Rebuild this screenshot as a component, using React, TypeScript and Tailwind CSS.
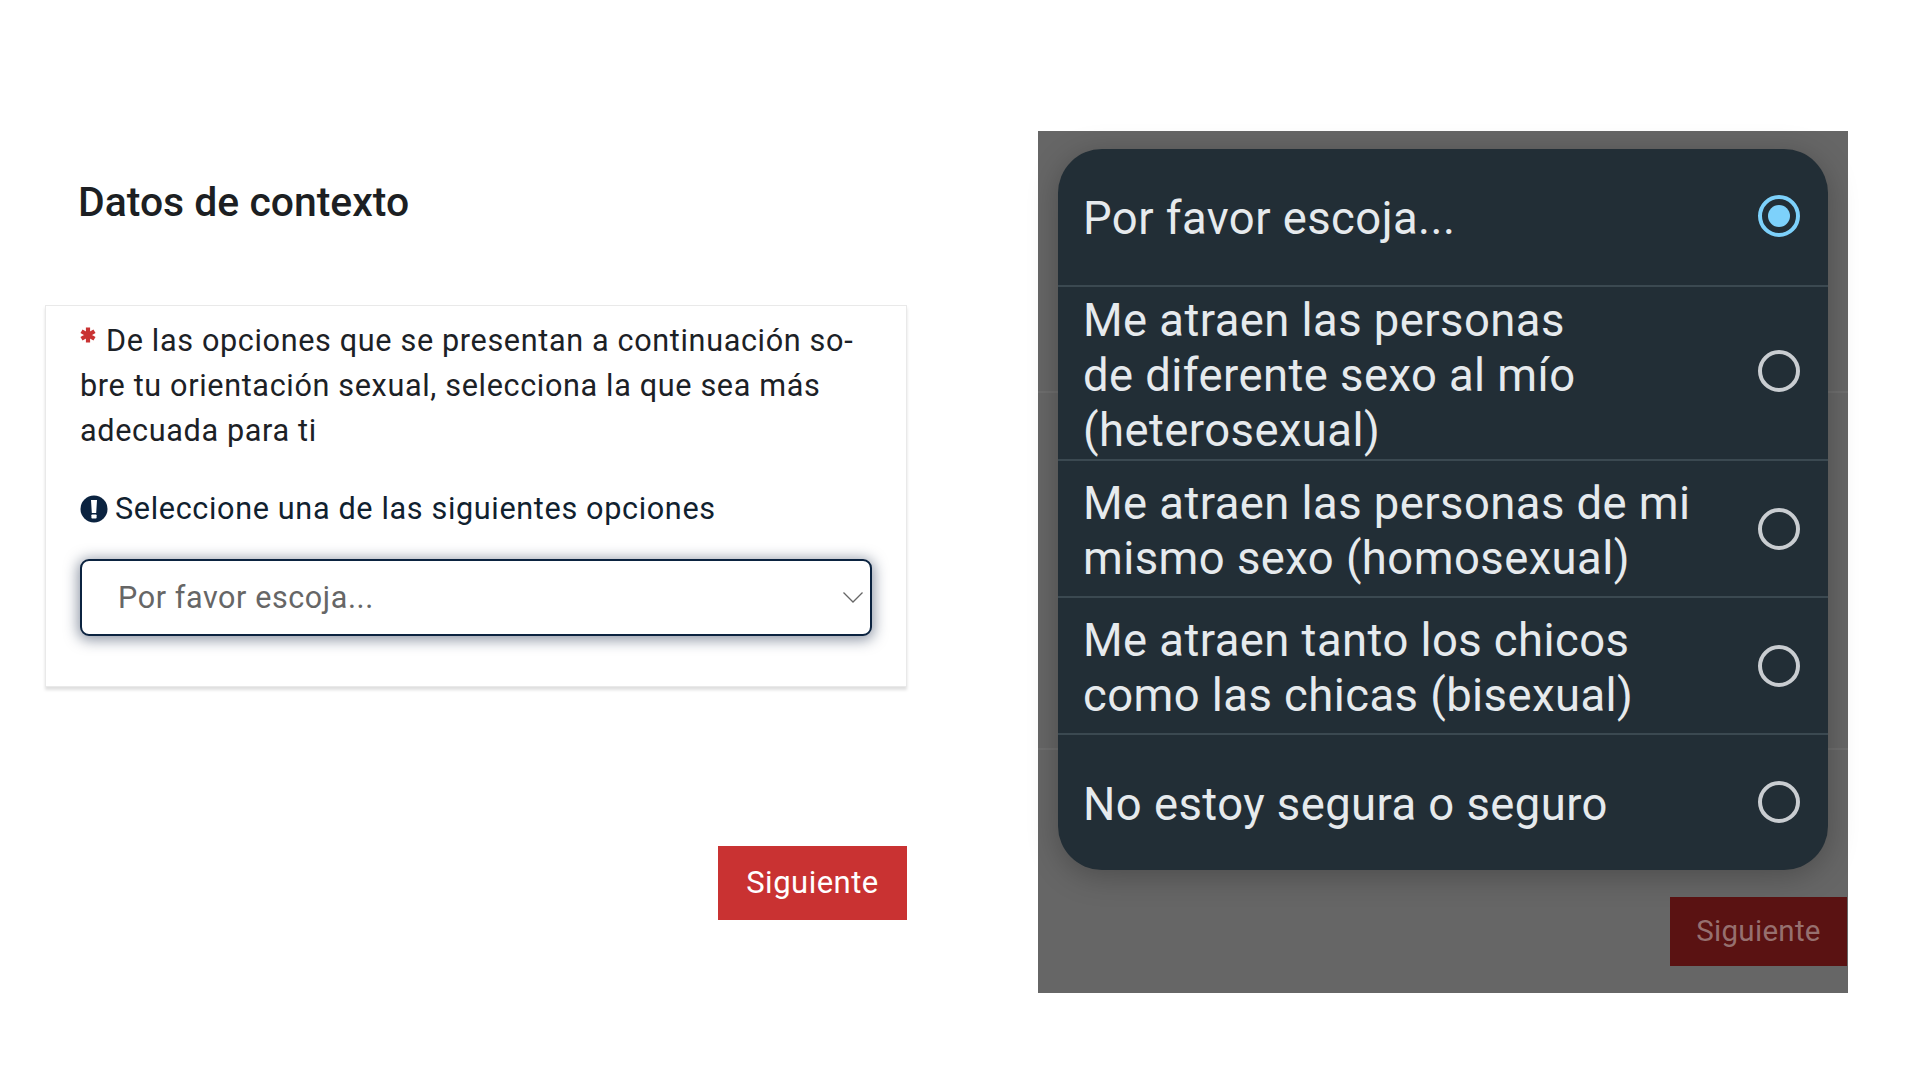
import React from "react";

const font = { fontFamily: "Roboto, sans-serif" };

function Radio({ on, lift }: { on?: boolean; lift: string }) {
  return (
    <span
      className={
        "flex h-[42px] w-[42px] shrink-0 items-center justify-center rounded-full border-[4px] " +
        lift +
        " " +
        (on ? "border-[#7dd1fb]" : "border-[#c9cdd1]")
      }
    >
      {on && <span className="h-[22px] w-[22px] rounded-full bg-[#7dd1fb]" />}
    </span>
  );
}

function Option({ lines, h, on, lift = "", pad = "pt-[4px]" }: { lines: string[]; h: string; on?: boolean; lift?: string; pad?: string }) {
  return (
    <div className={"flex items-center justify-between border-b-2 border-[#3b4951] pl-[25px] pr-[28px] last:border-b-0 " + h}>
      <div className={"text-[45.4px] leading-[55px] tracking-[0.45px] text-[#e6eaed] " + pad}>
        {lines.map((l) => (
          <div key={l} className="whitespace-nowrap">{l}</div>
        ))}
      </div>
      <Radio on={on} lift={lift} />
    </div>
  );
}

export default function App() {
  return (
    <div className="flex h-[1080px] w-[1920px] overflow-hidden bg-white" style={font}>
      <div className="ml-[45px] flex w-[862px] flex-col">
        <h1 className="ml-[33px] mt-[179px] text-[40.9px] font-medium leading-[46px] text-[#1c1f23]">Datos de contexto</h1>
        <div className="mt-[80px] h-[382px] border border-[#e9e9e9] px-[34px] pt-[12px] shadow-[0_3px_3px_rgba(0,0,0,0.13)]">
          <div className="text-[30.6px] leading-[45px] tracking-[0.65px] text-[#1c2126]">
            <div className="flex items-center whitespace-nowrap">
              <svg width="16" height="16" viewBox="0 0 16 16" className="mb-[12px] mr-[10px] shrink-0" stroke="#c93232" strokeWidth="4.2">
                <path d="M8 0.5v15M1.5 4.25l13 7.5M1.5 11.75l13-7.5" />
              </svg>
              De las opciones que se presentan a continuación so-
            </div>
            <div className="whitespace-nowrap">bre tu orientación sexual, selecciona la que sea más</div>
            <div className="whitespace-nowrap">adecuada para ti</div>
          </div>
          <div className="mt-[33px] flex items-center gap-[7px] text-[30.6px] leading-[45px] tracking-[0.65px] text-[#10212f]">
            <svg width="28" height="28" viewBox="0 0 28 28" className="shrink-0">
              <circle cx="14" cy="14" r="13.5" fill="#0b2340" />
              <path d="M11 5h6l-.8 13h-4.4z" fill="#fff" />
              <rect x="11.4" y="19.5" width="5.2" height="4" rx="0.8" fill="#fff" />
            </svg>
            <span className="whitespace-nowrap">Seleccione una de las siguientes opciones</span>
          </div>
          <div className="mt-[28px] flex h-[77px] items-center justify-between rounded-[9px] border-2 border-[#0b2340] bg-white pl-[36px] pr-[7px] shadow-[0_2px_14px_2px_rgba(30,45,75,0.5)]">
            <span className="pt-[1px] text-[30.5px] tracking-[0.6px] text-[#666666]">Por favor escoja...</span>
            <svg width="20" height="11" viewBox="0 0 20 11" fill="none" stroke="#666" strokeWidth="1.3">
              <path d="M0.5 0.5l9.5 9.5 9.5-9.5" />
            </svg>
          </div>
        </div>
        <button className="ml-auto mt-[159px] h-[74px] w-[189px] bg-[#c93232] pt-[1px] text-[31px] tracking-[0.5px] text-white">Siguiente</button>
      </div>

      <div className="relative ml-[131px] mt-[131px] flex h-[862px] w-[810px] flex-col bg-[#666666] pl-[20px] pr-[20px] pt-[18px]">
        <div className="absolute left-0 right-0 top-[260px] h-[2px] bg-[#6e6e6e]" />
        <div className="absolute left-0 right-0 top-[617px] h-[2px] bg-[#6e6e6e]" />
        <div className="relative flex h-[721px] flex-col overflow-hidden rounded-[44px] bg-[#222e36] shadow-[0_6px_30px_rgba(0,0,0,0.25)]">
          <Option h="h-[138px]" pad="pt-[2px]" lift="mb-[2px]" lines={["Por favor escoja..."]} on />
          <Option h="h-[174px]" lift="mb-[4px]" lines={["Me atraen las personas", "de diferente sexo al mío", "(heterosexual)"]} />
          <Option h="h-[137px]" lines={["Me atraen las personas de mi", "mismo sexo (homosexual)"]} />
          <Option h="h-[137px]" lines={["Me atraen tanto los chicos", "como las chicas (bisexual)"]} />
          <Option h="h-[135px]" lift="mb-[2px]" lines={["No estoy segura o seguro"]} />
        </div>
        <button className="relative -mr-[19px] ml-auto mt-[27px] h-[69px] w-[177px] bg-[#5a1212] text-[29.5px] tracking-[0.3px] text-[#96706f]">Siguiente</button>
      </div>
    </div>
  );
}
